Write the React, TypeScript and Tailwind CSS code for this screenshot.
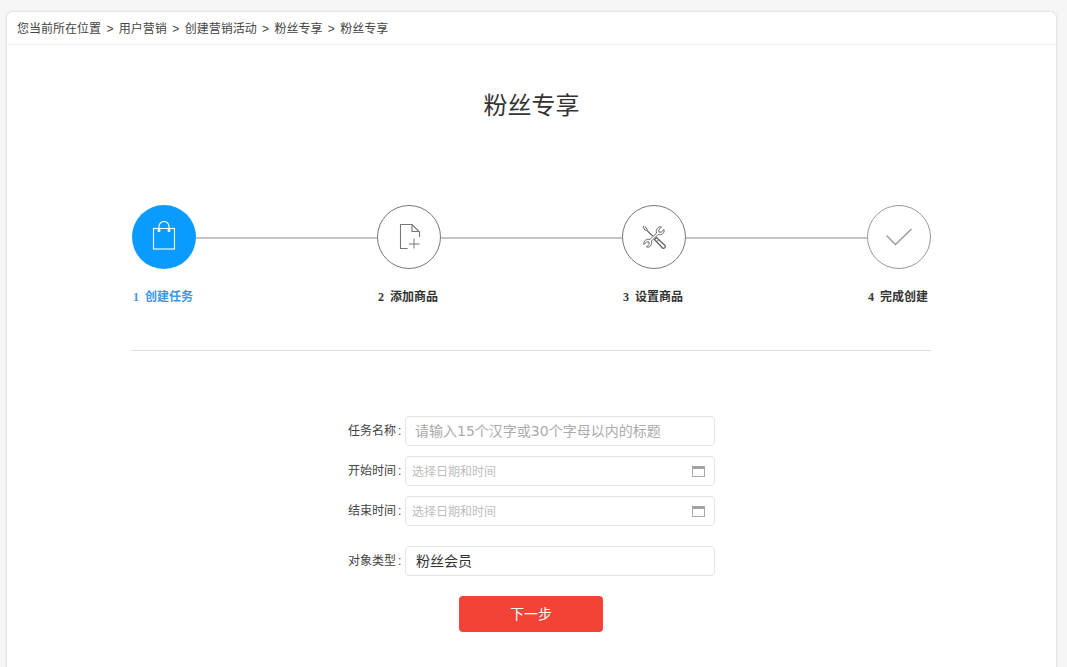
import React from "react";

const FONT = "font-['Liberation_Sans','Noto_Sans_CJK_SC',sans-serif]";

function Bag() {
  return (
    <svg width="24" height="30" viewBox="0 0 24 30" fill="none" stroke="#fff" strokeWidth="1.1" className="-mt-0.5">
      <rect x="1.5" y="7.5" width="21" height="20.5" />
      <path d="M7 9V5.5a5 5 0 0 1 10 0V9" />
      <circle cx="7" cy="9.5" r="1" fill="#fff" />
      <circle cx="17" cy="9.5" r="1" fill="#fff" />
    </svg>
  );
}

function DocPlus() {
  return (
    <svg width="24" height="26" viewBox="0 0 24 26" fill="none" stroke="#777" strokeWidth="1.1">
      <path d="M10.5 24.5H3.5V.5H15L22.5 8V13" />
      <path d="M15 .5V7.5H22.5" />
      <path d="M12 20h10.5M17 14.5v10" strokeWidth="1" />
    </svg>
  );
}

function Tools() {
  return (
    <svg width="24" height="24" viewBox="0 0 24 24" fill="none" stroke="#666" strokeWidth="1" strokeLinejoin="round">
      <path d="M2 1L1 2l2 3.2h1.4L10 10.8M3 1.2l2.2 3.2v1L11 11" />
      <path d="M14.5 12.5L22.5 20c1 1 1 2 .2 2.8-.9.8-1.900.7-2.700-.3L12.500 14.500z" strokeWidth="1.300" />
      <path d="M15 16.500l1.800-1.800" />
      <path d="M19.500 2L16.800 4.700 17 7l2.300.2L22 4.500c1 3.500-2.500 6-6 5L9.500 16c1 3.500-1.500 7-5 6l2.700-2.700L7 17l-2.300-.2L2 19.500c-1-3.500 2.500-6 6-5L14.500 8c-1-3.500 1.500-7 5-6z" fill="#fff" />
    </svg>
  );
}

function Check() {
  return (
    <svg width="26" height="18" viewBox="0 0 26 18" fill="none" stroke="#999" strokeWidth="1.4">
      <path d="M.5 7.500L9.500 16.500 25.500 1" />
    </svg>
  );
}

function Calendar() {
  return (
    <svg width="13" height="11" viewBox="0 0 13 11" className="shrink-0">
      <rect x="0.5" y="0.5" width="12" height="10" fill="#fff" stroke="#aaa" />
      <rect x="0" y="0" width="13" height="3" fill="#a3a3a3" />
    </svg>
  );
}

function Circle({ className, children }: { className: string; children: React.ReactNode }) {
  return (
    <div className={`w-16 h-16 rounded-full flex items-center justify-center shrink-0 ${className}`}>
      {children}
    </div>
  );
}

function Line() {
  return <div className="flex-1 h-0.5 mt-0.5 bg-[#c4c4c4]" />;
}

function StepLabel({ n, text, className }: { n: string; text: string; className: string }) {
  return (
    <div className={`w-16 pr-0.5 flex items-center justify-center gap-[6px] whitespace-nowrap text-xs font-bold leading-4 ${className}`}>
      <span className="font-['Liberation_Serif',serif]">{n}</span>
      <span>{text}</span>
    </div>
  );
}

function Row({ label, className = "", children }: { label: string; className?: string; children: React.ReactNode }) {
  return (
    <div className={`flex items-center h-[30px] ${className}`}>
      <label className="w-[57px] text-xs text-[#444] whitespace-nowrap">
        {label}
        <span className="ml-0.5">:</span>
      </label>
      {children}
    </div>
  );
}

function DateInput() {
  return (
    <div className="w-[310px] h-[30px] border border-[#e3e3e3] rounded-sm flex items-center pl-[6px] pr-[9px]">
      <input
        placeholder="选择日期和时间"
        className="flex-1 min-w-0 pt-px outline-none text-xs bg-transparent placeholder:text-[#bdbdbd]"
      />
      <Calendar />
    </div>
  );
}

export default function App() {
  return (
    <div className={`${FONT} h-screen overflow-hidden bg-[#f6f6f6] pt-3 pl-[7px] pr-[11px]`}>
      <div className="h-[700px] bg-white rounded-t-md shadow-[0_0_3px_rgba(0,0,0,0.18)]">
        <div className="h-[33px] border-b border-[#f0f0f0] pl-[10px] pt-px flex items-center gap-[5.4px] text-xs text-[#444] whitespace-nowrap">
          <span>您当前所在位置</span>
          <span>&gt;</span>
          <span>用户营销</span>
          <span>&gt;</span>
          <span>创建营销活动</span>
          <span>&gt;</span>
          <span>粉丝专享</span>
          <span>&gt;</span>
          <span>粉丝专享</span>
        </div>

        <h1 className="mt-[45px] h-8 text-center text-2xl leading-8 text-[#333] font-normal">粉丝专享</h1>

        <div className="w-[800px] ml-[124px] mt-[83px]">
          <div className="flex items-center ml-px">
            <Circle className="bg-[#0a9bff]"><Bag /></Circle>
            <Line />
            <Circle className="border border-[#777]"><DocPlus /></Circle>
            <Line />
            <Circle className="border border-[#777]"><Tools /></Circle>
            <Line />
            <Circle className="border border-[#999]"><Check /></Circle>
          </div>
          <div className="flex justify-between ml-px mt-5">
            <StepLabel n="1" text="创建任务" className="text-[#3a97e8]" />
            <StepLabel n="2" text="添加商品" className="text-[#333]" />
            <StepLabel n="3" text="设置商品" className="text-[#333]" />
            <StepLabel n="4" text="完成创建" className="text-[#333]" />
          </div>
          <div className="h-px bg-[#dedede] mt-[45px]" />
        </div>

        <div className="w-[380px] ml-[341px] mt-[65px]">
          <Row label="任务名称">
            <input
              placeholder="请输入15个汉字或30个字母以内的标题"
              className="w-[310px] h-[30px] border border-[#e3e3e3] rounded-sm pl-[9px] outline-none text-sm font-['DejaVu_Sans','Noto_Sans_CJK_SC',sans-serif] placeholder:text-[#aaa]"
            />
          </Row>
          <Row label="开始时间" className="mt-[10px]"><DateInput /></Row>
          <Row label="结束时间" className="mt-[10px]"><DateInput /></Row>
          <Row label="对象类型" className="mt-5">
            <div className="w-[310px] h-[30px] border border-[#e3e3e3] rounded-sm pl-[10px] flex items-center text-sm text-[#333]">
              粉丝会员
            </div>
          </Row>
          <button className="block ml-[111px] mt-5 w-[144px] h-9 rounded-sm bg-[#f44336] text-white text-sm">
            下一步
          </button>
        </div>
      </div>
    </div>
  );
}
